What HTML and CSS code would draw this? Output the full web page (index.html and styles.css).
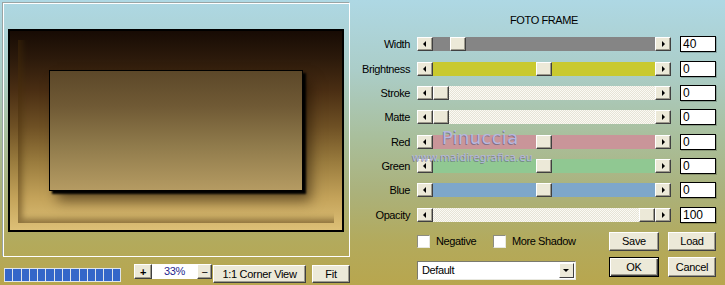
FILE: index.html
```html
<!DOCTYPE html>
<html lang="en">
<head>
    <meta charset="UTF-8">
    <title>Foto Frame</title>
    <link rel="stylesheet" href="styles.css">
</head>
<body>

<div class="dialog">
    <div class="left">
        <div class="preview">
            <div class="photo">
                <div class="bevel">
                    <div class="picture"></div>
                </div>
            </div>
        </div>

        <div class="zoombar">
            <div class="progress">
                <span></span><span></span><span></span><span></span><span></span><span></span><span></span>
                <span></span><span></span><span></span><span></span><span></span><span></span><span></span>
            </div>
            <button class="btn plus">+</button>
            <div class="zoomval">33%</div>
            <button class="btn minus">&minus;</button>
            <button class="btn corner">1:1 Corner View</button>
            <button class="btn fit">Fit</button>
        </div>
    </div>

    <div class="right">
        <div class="title">FOTO FRAME</div>

        <div class="rows">
            <div class="row">
                <label>Width</label>
                <div class="slider">
                    <span class="arrow prev"></span>
                    <div class="track gray"><span class="thumb" style="margin-left:17px"></span></div>
                    <span class="arrow next"></span>
                </div>
                <div class="val">40</div>
            </div>
            <div class="row">
                <label>Brightness</label>
                <div class="slider">
                    <span class="arrow prev"></span>
                    <div class="track yellow"><span class="thumb" style="margin-left:103px"></span></div>
                    <span class="arrow next"></span>
                </div>
                <div class="val">0</div>
            </div>
            <div class="row">
                <label>Stroke</label>
                <div class="slider">
                    <span class="arrow prev"></span>
                    <div class="track plain"><span class="thumb" style="margin-left:0px"></span></div>
                    <span class="arrow next"></span>
                </div>
                <div class="val">0</div>
            </div>
            <div class="row">
                <label>Matte</label>
                <div class="slider">
                    <span class="arrow prev"></span>
                    <div class="track plain"><span class="thumb" style="margin-left:0px"></span></div>
                    <span class="arrow next"></span>
                </div>
                <div class="val">0</div>
            </div>
            <div class="row">
                <label>Red</label>
                <div class="slider">
                    <span class="arrow prev"></span>
                    <div class="track red"><span class="thumb" style="margin-left:103px"></span></div>
                    <span class="arrow next"></span>
                </div>
                <div class="val">0</div>
            </div>
            <div class="row">
                <label>Green</label>
                <div class="slider">
                    <span class="arrow prev"></span>
                    <div class="track green"><span class="thumb" style="margin-left:103px"></span></div>
                    <span class="arrow next"></span>
                </div>
                <div class="val">0</div>
            </div>
            <div class="row">
                <label>Blue</label>
                <div class="slider">
                    <span class="arrow prev"></span>
                    <div class="track blue"><span class="thumb" style="margin-left:103px"></span></div>
                    <span class="arrow next"></span>
                </div>
                <div class="val">0</div>
            </div>
            <div class="row">
                <label>Opacity</label>
                <div class="slider">
                    <span class="arrow prev"></span>
                    <div class="track plain"><span class="thumb" style="margin-left:206px"></span></div>
                    <span class="arrow next"></span>
                </div>
                <div class="val">100</div>
            </div>
        </div>

        <!-- watermark over the sliders -->
        <div class="watermark">
            <div class="wm-name">Pinuccia</div>
            <div class="wm-site">www.maidiregrafica.eu</div>
        </div>

        <div class="footer">
            <div class="options">
                <div class="checks">
                    <label class="check first"><span class="box"></span>Negative</label>
                    <label class="check"><span class="box"></span>More Shadow</label>
                </div>
                <div class="dropdown">
                    <span>Default</span>
                    <span class="drop-btn"></span>
                </div>
            </div>
            <div class="buttons">
                <button class="btn">Save</button>
                <button class="btn">Load</button>
                <button class="btn default">OK</button>
                <button class="btn">Cancel</button>
            </div>
        </div>
    </div>
</div>

</body>
</html>
```

FILE: styles.css
```css
 body {
     margin: 0;
     width: 725px;
     height: 285px;
     overflow: hidden;
     font-family: 'Liberation Sans', Arial, sans-serif;
     font-size: 11px;
     letter-spacing: -0.4px;
     color: #000;
     background: linear-gradient(180deg, #aed8e4 0%, #abcdc8 25%, #a9bf9c 48%, #abb17a 68%, #b3aa5c 85%, #b8a64e 100%);
 }

 .dialog {
     display: flex;
     height: 285px;
 }

 /* ---------- left side ---------- */

 .left {
     width: 352px;
 }

 .preview {
     box-sizing: border-box;
     width: 347px;
     height: 254px;
     margin: 3px 0 0 3px;
     border: 1px solid #fff;
     box-shadow: -1px -1px 0 #9aa4a4;
     padding: 25px 0 0 4px;
 }

 .photo {
     box-sizing: border-box;
     width: 336px;
     height: 203px;
     border: 2px solid #000;
     padding: 9px 8px 7px 8px;
     background: linear-gradient(180deg, #170b04 0%, #2c1a0b 14%, #4a2e13 30%, #6e5024 48%, #9a7c3e 66%, #c4a35a 84%, #ddc077 100%);
 }

 .bevel {
     box-sizing: border-box;
     height: 100%;
     padding: 30px 0 0 31px;
     box-shadow: inset 7px -7px 6px -3px rgba(70, 45, 10, 0.5);
 }

 .picture {
     box-sizing: border-box;
     width: 254px;
     height: 121px;
     border: 1px solid #000;
     background: linear-gradient(180deg, #5c4829 0%, #705a35 30%, #8f7a4b 62%, #b59b62 100%);
     box-shadow: 3px 3px 2px #000, 8px 10px 12px rgba(30, 15, 0, 0.55);
 }

 .zoombar {
     display: flex;
     align-items: flex-start;
     margin-top: 7px;
 }

 .progress {
     box-sizing: border-box;
     display: flex;
     gap: 1px;
     width: 117px;
     height: 14px;
     margin: 4px 0 0 4px;
     padding: 1px;
     background: #dfe4ea;
 }

 .progress span {
     flex: 1;
     background: #3567c9;
 }

 .btn {
     box-sizing: border-box;
     font-family: 'Liberation Sans', Arial, sans-serif;
     font-size: 11px;
     letter-spacing: -0.3px;
     color: #000;
     background: #ece9d8;
     border: 1px solid;
     border-color: #fff #404040 #404040 #fff;
     box-shadow: inset -1px -1px 0 #9d9a8c;
     padding: 0;
     margin: 0;
 }

 .plus {
     width: 18px;
     height: 15px;
     margin-left: 13px;
     font-weight: bold;
     line-height: 12px;
 }

 .zoomval {
     box-sizing: border-box;
     width: 45px;
     height: 15px;
     background: #fff;
     color: #1f1f8f;
     text-align: center;
     line-height: 14px;
 }

 .minus {
     width: 15px;
     height: 15px;
     line-height: 12px;
 }

 .corner {
     width: 93px;
     height: 18px;
     margin: 1px 0 0 1px;
 }

 .fit {
     width: 38px;
     height: 18px;
     margin: 1px 0 0 6px;
 }

 /* ---------- right side ---------- */

 .right {
     position: relative;
     width: 373px;
 }

 .title {
     width: 254px;
     margin-left: 65px;
     padding-top: 14px;
     height: 18px;
     line-height: 13px;
     text-align: center;
 }

 .row {
     display: flex;
     align-items: center;
     height: 24.35px;
 }

 .row label {
     width: 58px;
     padding-right: 7px;
     text-align: right;
 }

 .slider {
     display: flex;
     width: 254px;
     height: 14px;
     margin-right: 9px;
 }

 .arrow {
     box-sizing: border-box;
     position: relative;
     width: 16px;
     height: 14px;
     background: #ece9d8;
     border: 1px solid;
     border-color: #fff #404040 #404040 #fff;
     box-shadow: inset -1px -1px 0 #9d9a8c;
 }

 .arrow::after {
     content: '';
     position: absolute;
     top: 3px;
     left: 5px;
     border: 3px solid transparent;
 }

 .arrow.prev::after {
     border-right: 3px solid #000;
     border-left: 0;
 }

 .arrow.next::after {
     left: 6px;
     border-left: 3px solid #000;
     border-right: 0;
 }

 .track {
     flex: 1;
     display: flex;
 }

 .track.gray { background: #858585; }
 .track.yellow { background: #c9c92f; }
 .track.red { background: #c99599; }
 .track.green { background: #90c892; }
 .track.blue { background: #7ea7ca; }

 .track.plain {
     background: repeating-conic-gradient(#fbfaf4 0 25%, #e6e3d6 0 50%) 0 0 / 2px 2px;
 }

 .thumb {
     box-sizing: border-box;
     width: 16px;
     height: 14px;
     background: #ece9d8;
     border: 1px solid;
     border-color: #fff #404040 #404040 #fff;
     box-shadow: inset -1px -1px 0 #9d9a8c;
 }

 .val {
     box-sizing: border-box;
     width: 36px;
     height: 16px;
     padding-left: 2px;
     background: #fff;
     border: 1px solid #000;
     line-height: 14px;
     letter-spacing: 0;
     font-size: 12px;
     box-shadow: 1px 1px 0 rgba(0, 0, 0, 0.2);
 }

 .watermark {
     position: absolute;
     left: 60px;
     top: 128px;
     pointer-events: none;
     letter-spacing: 0;
     font-family: 'DejaVu Sans', sans-serif;
 }

 .wm-name {
     margin-left: 30px;
     font-size: 18px;
     line-height: 20px;
     letter-spacing: 0.3px;
     color: #b6b7df;
     text-shadow: -1px 1px 0 rgba(95, 95, 125, 0.65);
 }

 .wm-site {
     font-size: 10.5px;
     line-height: 12px;
     margin-top: 3px;
     color: #b4b5dc;
     text-shadow: -1px 1px 0 rgba(95, 95, 125, 0.6);
 }

 .footer {
     display: flex;
     margin-left: 65px;
     padding-top: 5px;
 }

 .options {
     width: 159px;
     margin-right: 33px;
 }

 .checks {
     display: flex;
     align-items: center;
     height: 19px;
 }

 .check {
     display: flex;
     align-items: center;
     gap: 6px;
 }

 .check.first {
     width: 76px;
 }

 .box {
     box-sizing: border-box;
     width: 13px;
     height: 13px;
     background: #fff;
     border: 1px solid;
     border-color: #8c8c80 #e8e8e0 #e8e8e0 #8c8c80;
 }

 .dropdown {
     box-sizing: border-box;
     display: flex;
     align-items: center;
     justify-content: space-between;
     height: 19px;
     margin-top: 10px;
     padding: 0 1px 0 4px;
     background: #fff;
     border: 1px solid;
     border-color: #7a7a6e #e8e8e0 #e8e8e0 #7a7a6e;
 }

 .drop-btn {
     box-sizing: border-box;
     position: relative;
     width: 15px;
     height: 15px;
     background: #ece9d8;
     border: 1px solid;
     border-color: #fff #404040 #404040 #fff;
 }

 .drop-btn::after {
     content: '';
     position: absolute;
     left: 3px;
     top: 5px;
     border: 3px solid transparent;
     border-top: 3px solid #000;
     border-bottom: 0;
 }

 .buttons {
     display: grid;
     grid-template-columns: 50px 48px;
     grid-template-rows: 19px 20px;
     column-gap: 9px;
     row-gap: 6px;
 }

 .btn.default {
     outline: 1px solid #000;
     outline-offset: -1px;
     border-color: #000;
     box-shadow: inset 1px 1px 0 #fff, inset -1px -1px 0 #404040, inset -2px -2px 0 #9d9a8c;
 }
```
